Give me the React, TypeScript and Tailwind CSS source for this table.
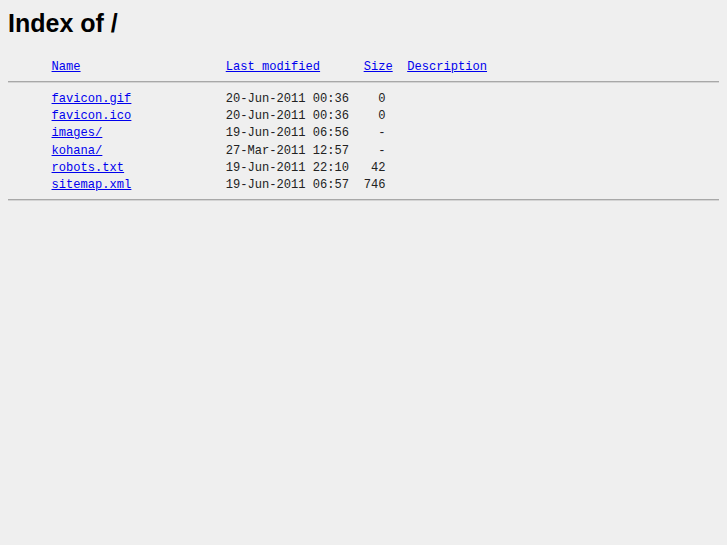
const FILES = [
  { name: "favicon.gif", date: "20-Jun-2011 00:36", size: "  0 " },
  { name: "favicon.ico", date: "20-Jun-2011 00:36", size: "  0 " },
  { name: "images/", date: "19-Jun-2011 06:56", size: "  - " },
  { name: "kohana/", date: "27-Mar-2011 12:57", size: "  - " },
  { name: "robots.txt", date: "19-Jun-2011 22:10", size: " 42 " },
  { name: "sitemap.xml", date: "19-Jun-2011 06:57", size: "746 " },
];

const mono = "font-['Liberation_Mono','DejaVu_Sans_Mono',monospace] text-[12.1px] leading-[17.2px]";

function Rule() {
  return <div className="h-[2px] border-t border-[#a8a8a8] bg-[#d4d4d4]" />;
}

export default function App() {
  return (
    <div className="min-h-screen bg-[#efefef] p-2 text-black">
      <h1 className="font-['Liberation_Sans',Arial,sans-serif] text-[25px] font-bold leading-[30px]">
        Index of /
      </h1>

      <div className={`mt-[21.4px] ${mono}`}>
        <div className="whitespace-pre">
          {"      "}
          <a href="#" className="text-[#0000ee] underline">Name</a>
          {"                    "}
          <a href="#" className="text-[#0000ee] underline">Last modified</a>
          {"      "}
          <a href="#" className="text-[#0000ee] underline">Size</a>
          {"  "}
          <a href="#" className="text-[#0000ee] underline">Description</a>
        </div>

        <div className="mt-[4px] mb-[8.4px]">
          <Rule />
        </div>

        {FILES.map((f) => (
          <div key={f.name} className="whitespace-pre text-[#222]">
            {"      "}
            <a href="#" className="text-[#0000ee] underline">{f.name}</a>
            {" ".repeat(24 - f.name.length)}
            {f.date}
            {"  "}
            {f.size}
          </div>
        ))}

        <div className="mt-[5px]">
          <Rule />
        </div>
      </div>
    </div>
  );
}
